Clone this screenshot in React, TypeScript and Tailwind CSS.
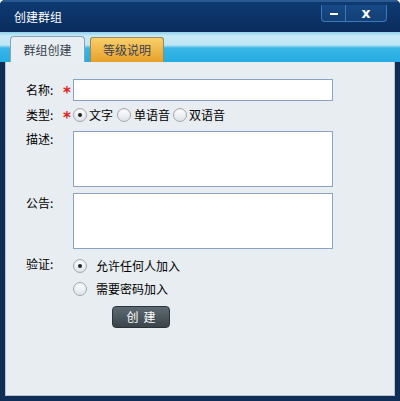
const font = { fontFamily: '"Noto Sans CJK SC", "Liberation Sans", sans-serif' };

function Radio({ checked }: { checked?: boolean }) {
  return (
    <span className="flex h-[14px] w-[14px] shrink-0 items-center justify-center rounded-full border border-[#a3a9b0] bg-gradient-to-b from-[#ffffff] to-[#dfe3e7] shadow-[inset_0_1px_1px_rgba(0,0,0,0.08)]">
      {checked && <span className="h-[4px] w-[4px] rounded-full bg-[#222]" />}
    </span>
  );
}

function Label({ text, required }: { text: string; required?: boolean }) {
  return (
    <div className="flex h-[14px] w-[47px] shrink-0 items-start">
      <span className="w-[37px] text-black">{text}</span>
      {required && (
        <span
          className="h-[14px] w-[10px] translate-y-[3px] text-[15px] font-bold leading-[14px] text-[#e02020]"
          style={{ fontFamily: '"DejaVu Sans", sans-serif' }}
        >
          *
        </span>
      )}
    </div>
  );
}

export default function App() {
  return (
    <div
      className="flex h-[401px] w-[400px] flex-col overflow-hidden rounded-t-[5px] bg-[#0f2d55] text-[12px] leading-[14px]"
      style={font}
    >
      {/* Title bar */}
      <div className="relative flex h-[32px] shrink-0 items-center border-t-2 border-[#2a5a94] bg-gradient-to-b from-[#0e3a72] to-[#0a2d5e] pl-[14px]">
        <span className="text-[12px] text-white">创建群组</span>
        <div className="absolute right-[13px] top-[3px] flex h-[17px] overflow-hidden rounded-b-[4px] border border-t-0 border-[#3d78b8] bg-gradient-to-b from-[#174a86] to-[#123f76]">
          <div className="flex w-[24px] items-center justify-center border-r border-[#3d78b8]">
            <span className="mt-[1px] h-[2px] w-[8px] bg-white" />
          </div>
          <div
            className="flex w-[40px] items-center justify-center text-[14px] font-bold text-white"
            style={{ fontFamily: '"DejaVu Sans", sans-serif' }}
          >
            x
          </div>
        </div>
      </div>

      {/* Tab strip */}
      <div className="flex h-[30px] shrink-0 items-end gap-[5px] bg-[linear-gradient(to_bottom,#8fd0ec_0px,#c8eaf7_4px,#bfe6f5_13px,#3ab6e6_16px,#24ace1_30px)] pl-[10px]">
        <div className="flex h-[26px] w-[75px] items-center justify-center rounded-t-[4px] border border-b-0 border-[#8ba3b5] bg-[#e9eef2] text-[#333f4f]">
          群组创建
        </div>
        <div className="flex h-[25px] w-[74px] items-center justify-center rounded-t-[3px] border border-b-0 border-[#9c8a5c] bg-gradient-to-b from-[#f9cf68] to-[#e6a126] text-[#3a3d55]">
          等级说明
        </div>
      </div>

      {/* Content */}
      <div className="mx-[5px] mb-[5px] flex flex-1 flex-col border border-t-0 border-[#b8c2cc] bg-[#e8edf1] pl-[20px] pt-[17px]">
        {/* 名称 */}
        <div className="flex items-center">
          <Label text="名称:" required />
          <div className="h-[22px] w-[260px] border border-[#8aa3c0] bg-white" />
        </div>

        {/* 类型 */}
        <div className="mt-[7px] flex items-center">
          <Label text="类型:" required />
          <Radio checked />
          <span className="ml-[2px] mr-[4px]">文字</span>
          <Radio />
          <span className="ml-[3px] mr-[3px]">单语音</span>
          <Radio />
          <span className="ml-[2px]">双语音</span>
        </div>

        {/* 描述 */}
        <div className="mt-[9px] flex">
          <div className="pt-[1px]">
            <Label text="描述:" />
          </div>
          <div className="h-[56px] w-[260px] border border-[#8aa3c0] bg-white" />
        </div>

        {/* 公告 */}
        <div className="mt-[6px] flex">
          <div className="pt-[3px]">
            <Label text="公告:" />
          </div>
          <div className="h-[56px] w-[260px] border border-[#8aa3c0] bg-white" />
        </div>

        {/* 验证 */}
        <div className="mt-[8px] flex">
          <Label text="验证:" />
          <div className="flex flex-col gap-[9px] pt-[2px]">
            <div className="flex items-center">
              <Radio checked />
              <span className="ml-[9px]">允许任何人加入</span>
            </div>
            <div className="flex items-center">
              <Radio />
              <span className="ml-[9px]">需要密码加入</span>
            </div>
          </div>
        </div>

        {/* 创建 button */}
        <div className="mt-[10px] pl-[86px]">
          <button className="flex h-[22px] w-[58px] items-center justify-center rounded-[4px] border border-[#2b3238] bg-gradient-to-b from-[#5e6a72] to-[#3b444b] text-[12px] tracking-[5px] text-white">
            <span className="pl-[5px]">创建</span>
          </button>
        </div>
      </div>
    </div>
  );
}
